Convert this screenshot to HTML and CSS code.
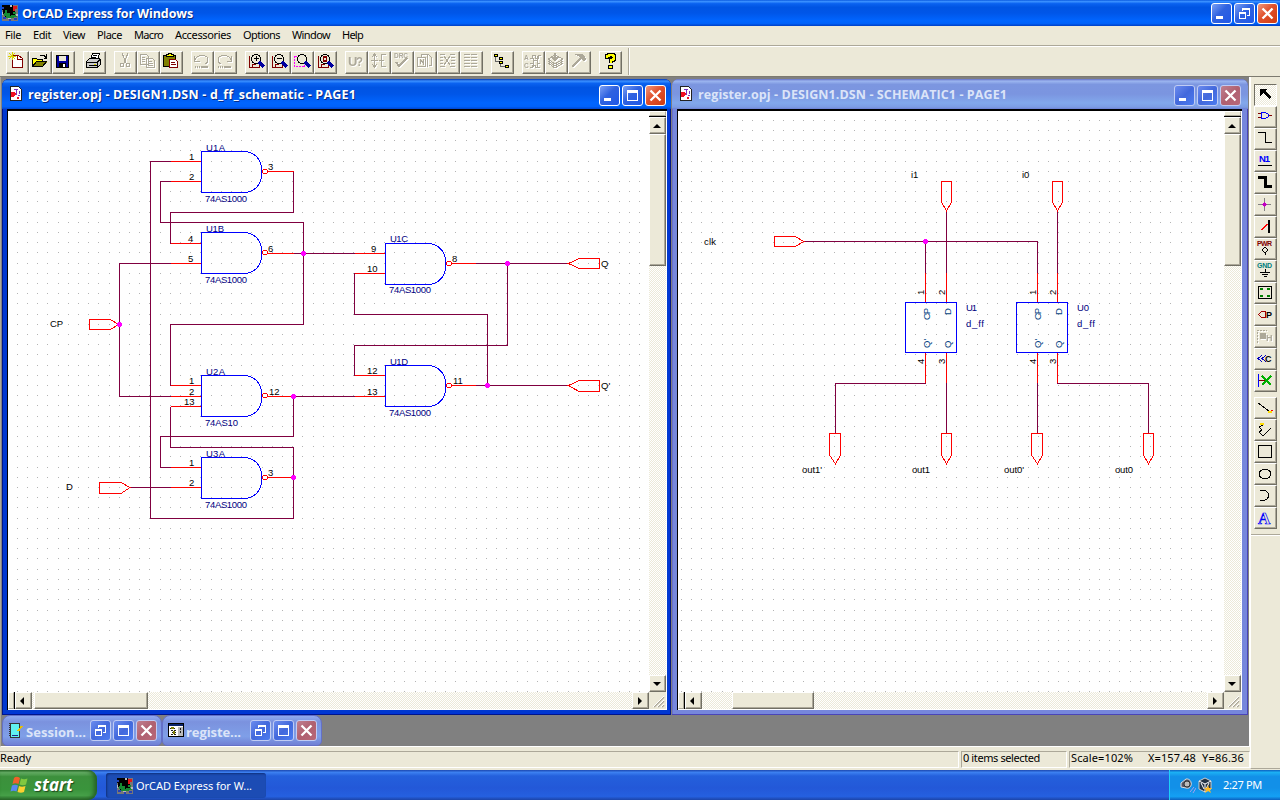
FILE: index.html
```html
<!DOCTYPE html>
<html lang="en">
<head>
<meta charset="utf-8">
<title>OrCAD Express for Windows</title>
<link rel="stylesheet" href="styles.css">
</head>
<body>
<svg class="defs" width="0" height="0">
  <defs>
    <symbol id="orcad" viewBox="0 0 16 16"><path fill="#777" d="M0 0h16v16H0z"/><path fill="#000" d="M0 0h11v5h2v6H8v2H3V9H1V5H0z"/><path fill="#158a32" d="M3 5h2v3h3v3h4v2H4v-2H2V8h1zM11 7h3v2h-3zM9 10h6v2H9z"/><path fill="#e01818" d="M11 1h4v3h-2v2h-2z"/><path fill="#2440b8" d="M0 2h2v2H0zM1 12h3v2H1zM7 14h2v2H7zM12 13h3v2h-3z"/><path fill="#bbb" d="M8 0h2v2H8zM0 7h1v3H0zM6 13h3v1H6zM14 9h2v2h-2z"/></symbol>
    <symbol id="page" viewBox="0 0 13 16"><path fill="#fff" stroke="#222" d="M.5 .5h8l3 3v11H.5z"/><path fill="#f01020" d="M1 6h3l2 2-2 3H1zM7 11h2v2H7z"/><path fill="none" stroke="#7a30c0" d="M4 3.500h4M6.500 4v5M8 9.500h2M9.500 5v3"/></symbol>
    <symbol id="min" viewBox="0 0 21 21"><path fill="#fff" d="M5 13h7v3H5z"/></symbol>
    <symbol id="max" viewBox="0 0 21 21"><path fill="#fff" fill-rule="evenodd" d="M5 5h11v11H5zM6 8v7h9V8z"/></symbol>
    <symbol id="restore" viewBox="0 0 21 21"><path fill="#fff" fill-rule="evenodd" d="M8 5h8v8h-3v-1h2V7H9v1H8zM5 9h7v7H5zM6 11v4h5v-4z"/></symbol>
    <symbol id="close" viewBox="0 0 21 21"><path fill="none" stroke="#fff" stroke-width="2.300" d="M5.500 5.500l10 10M15.500 5.500l-10 10"/></symbol>
    <symbol id="nand" overflow="visible"><path class="blue" d="M43 .5H.5v41H43"/><path class="blue" d="M43 .5C55 1 61 10 61 21S55 41 43 41.500"/><circle class="red" cx="64" cy="20.500" r="2.500"/></symbol>
    <symbol id="dot" overflow="visible"><path fill="#f0f" d="M-1-2h3v1h1v3h-1v1h-3v-1h-1v-3h1z"/></symbol>
    <symbol id="lens" overflow="visible"><path stroke="#800000" d="M5.500 6v11.500h10V15M8 14.500v3M8 14.500h4"/><circle cx="12" cy="9" r="4.500" fill="#ece9d8" stroke="#000"/><path stroke="#0000a0" stroke-width="3" d="M15 12l5 5"/></symbol>
    <symbol id="grip" viewBox="0 0 17 17"><path stroke="#aca899" stroke-width="1.600" d="M5 15L15 5M9 15l6-6M13 15l2-2"/><path stroke="#fff" d="M4 15L15 4M8 15l7-7M12 15l3-3"/></symbol>
  </defs>
</svg>

<div class="app">
  <header class="apptitle">
    <svg class="ico16"><use href="#orcad"/></svg>
    <span class="caption" data-fit="171">OrCAD Express for Windows</span>
    <div class="ctl"><i><svg><use href="#min"/></svg></i><i><svg><use href="#restore"/></svg></i><i class="x"><svg><use href="#close"/></svg></i></div>
  </header>
  <nav class="menu">
    <span data-fit="16">File</span><span data-fit="18">Edit</span><span data-fit="22">View</span><span data-fit="25">Place</span><span data-fit="29">Macro</span><span data-fit="56">Accessories</span><span data-fit="37">Options</span><span data-fit="38">Window</span><span data-fit="21">Help</span>
  </nav>
  <div class="toolbar">
    <div class="grp">
      <b><svg><path fill="#fff" stroke="#800000" d="M7.500 5.500v12h10v-9l-4-3zM12.500 5.500v4h4"/><path stroke="#d8d000" d="M4 3l6 6M10 3L4 9M7.500 2v8M3 6.500h8"/></svg></b>
      <b><svg><path fill="#808000" d="M4 17V8h4l1 1h6v3h4l-4 5z"/><path fill="#ff0" d="M5 9h3l1 1h5v2H8l-3 4z"/><path d="M4.500 17V8.500h4l1 1h5v2M4.500 16.500h10l4-5h-10zM12 5.500h4l2 2M18.500 4v4h-3"/></svg></b>
      <b><svg><path fill="#0000a0" stroke="#000" d="M5.500 5.500h12v12h-12z"/><path fill="#ece9d8" d="M8 6h7v5H8z"/><path fill="#000" d="M8 13h7v5H8z"/><path fill="#fff" d="M12 14h2v3h-2z"/></svg></b>
    </div>
    <div class="grp"><b><svg><path fill="#fff" stroke="#000" d="M8.500 9.500l2-6h7l-2 6z"/><path fill="#ccc" stroke="#000" d="M4.500 11.500l3-3h10l1 1v5l-3 3h-11z"/><path d="M5 12.500h10l3-3M11 5.500h4M10 7.500h4M7 15.500h8M15.500 12v5"/><path stroke="#d8d000" d="M12 14.500h2"/></svg></b></div>
    <div class="grp">
      <b class="off"><svg><path d="M9 3l4 10M15 3l-4 10"/><circle cx="9" cy="15" r="2"/><circle cx="15" cy="15" r="2"/></svg></b>
      <b class="off"><svg><path d="M4.500 4.500h6l2 2v8h-8zM10.500 8.500h6l2 2v7h-8zM6 7.500h3M6 9.500h3M6 11.500h3M12 11.500h4M12 13.500h5M12 15.500h5"/></svg></b>
      <b><svg><path fill="#808000" stroke="#000" d="M4.500 5.500h12v11h-12z"/><path fill="#ff0" stroke="#000" d="M7.500 6.500v-2h2v-1h3v1h2v2z"/><path fill="#fff" stroke="#800000" d="M10.500 9.500h6l2 2v6h-8zM12 12.500h4M12 14.500h5"/></svg></b>
    </div>
    <div class="grp">
      <b class="off"><svg><path d="M4.500 6v5h5M5 10c1-6 14-6 13 0 0 2-1 3-3 4"/><path stroke-width="2" stroke-dasharray="1 1" d="M5 17h7"/><path stroke-width="2" d="M12 17h6"/></svg></b>
      <b class="off"><svg><path d="M18.500 6v5h-5M18 10C17 4 4 4 5 10c0 2 1 3 3 4"/><path stroke-width="2" stroke-dasharray="1 1" d="M5 17h7"/><path stroke-width="2" d="M12 17h6"/></svg></b>
    </div>
    <div class="grp">
      <b><svg><use href="#lens"/><path d="M10 8.500h5M12.500 6v5"/></svg></b>
      <b><svg><use href="#lens"/><path d="M10 8.500h5"/></svg></b>
      <b><svg><path stroke="#f0f" stroke-dasharray="2 1" d="M4.500 6.500h10v10h-10z"/><circle cx="12" cy="9" r="4.500" fill="#ece9d8" stroke="#000"/><path stroke="#0000a0" stroke-width="3" d="M15 12l5 5"/></svg></b>
      <b><svg><use href="#lens"/><path stroke="#800000" stroke-width="1.500" d="M10.500 7v4h3V7z"/></svg></b>
    </div>
    <div class="grp">
      <b class="off"><svg><text class="big" x="4" y="16">U</text><text class="big" x="12" y="16" textLength="7" lengthAdjust="spacingAndGlyphs">?</text></svg></b>
      <b class="off"><svg><path d="M7.500 5v12M5 7l2.500-3L10 7M5 14l2.500 3 2.500-3M4 10.500h7M19 4.500h-5v12h5M12 10.500h5"/></svg></b>
      <b class="off"><svg><text class="drc" x="4" y="8" textLength="14">DRC</text><path stroke-width="2" d="M6 12l3 4 8-8"/></svg></b>
      <b class="off"><svg><path d="M8.500 6.500v-2h7l3 3v8h-3M4.500 7.500h8v9h-8zM7 14V9l3 4V9M14.500 5v12"/></svg></b>
      <b class="off"><svg><path d="M4 4.500h5M4 7.500h3M4 10.500h3M4 13.500h3M4 16.500h5M14 4.500h5M15 7.500h4M15 10.500h4M15 13.500h4M14 16.500h5M8 6l6 9M14 6l-6 9"/></svg></b>
      <b class="off"><svg><path d="M5 4.500h6M5 7.500h6M5 10.500h6M5 13.500h6M5 16.500h6M12 4.500h6M12 7.500h6M12 10.500h6M12 13.500h6M12 16.500h6"/></svg></b>
    </div>
    <div class="grp"><b><svg><path stroke="#666" d="M5.500 6v5.500H9M10.500 12v4.500h4"/><path fill="#ff0" stroke="#000" d="M4.500 4.500h3v2h-3zM9.500 7.500h3v2h-3zM9.500 11.500h3v2h-3zM15.500 15.500h3v2h-3z"/></svg></b></div>
    <div class="grp">
      <b class="off"><svg><text class="drc" x="3" y="10">A</text><text class="drc" x="3" y="18">C</text><path d="M9 8.500h2v-3h3v3h3v-3h3M9 13.500h3v-3h4v3h3M9 17.500h2v-2h3v2h5M12.500 8v9M16.500 6v11"/></svg></b>
      <b class="off"><svg><path d="M4 9l7-4 8 4-8 5zM4 11l7 5 8-5M4 13l7 5 8-5"/><path stroke-width="2" d="M11 3v7M8 7l3 3 3-3"/></svg></b>
      <b class="off"><svg><path stroke-width="2" d="M5 17L14 8"/><path class="gray" d="M8 4h7l4 5-2 2-5-5z"/></svg></b>
    </div>
    <div class="grp"><b><svg><path stroke="#000" stroke-width="4" d="M8.500 9V6h2V5h4v1h1v3h-1v1h-2v3M10 16.500h5"/><path stroke="#ff0" stroke-width="2" d="M8.500 8V6h2V5h4v1h1v3h-1v1h-2v3M11 16.500h3"/></svg></b></div>
    <div class="barend"></div>
  </div>

  <div class="work">
    <main class="mdi">
      <div class="row">
        <section class="win one">
          <div class="wtitle"><svg class="page"><use href="#page"/></svg><span class="caption" data-fit="328">register.opj - DESIGN1.DSN - d_ff_schematic - PAGE1</span>
            <div class="ctl"><i><svg><use href="#min"/></svg></i><i><svg><use href="#max"/></svg></i><i class="x"><svg><use href="#close"/></svg></i></div></div>
          <div class="client">
            <svg class="canvas" viewBox="8 111 641 581">
              <path class="grid" data-x="17.300" data-y="120.400" data-r="645" data-b="692"/>
              <g class="wire">
                <path d="M171 161.500H150.500V518.500H293.500V447.500H170.500V406.500"/>
                <path d="M171 181.500H160.500V222.500H303.500V324.500H170.500V385.500"/>
                <path d="M293.500 171.500V212.500H170.500V243.500M293 253.500H355M171 263.500H119.500V396.500H171"/>
                <path d="M355 396.500H293.500V436.500H160.500V467.500H171M130 487.500H171"/>
                <path d="M354.500 273V314.500H487.500V385.500M354.500 375.500V345.500H507.500V263.500M476 263.500H569M476 385.500H569"/>
              </g>
              <path class="red" d="M171 161.500h30M171 181.500h30M171 243.500h30M171 263.500h30M171 385.500h30M171 396.500h30M171 406.500h30M171 467.500h30M171 487.500h30M355 253.500h30M355 273.500h30M355 375.500h30M355 396.500h30M268 171.500h26M268 253.500h26M268 396.500h25M268 477.500h25M452 263.500h24M452 385.500h24"/>
              <path class="red" d="M89.500 319.500H110L119 324.500 110 329.500H89.500zM99.500 482.500H121L130 487.500 121 493.500H99.500zM599.500 258.500H579L568.500 263.500 579 268.500H599.500zM599.500 380.500H579L568.500 385.500 579 391.500H599.500z"/>
              <use href="#nand" x="201" y="151"/><use href="#nand" x="201" y="232"/><use href="#nand" x="201" y="375"/><use href="#nand" x="201" y="457"/><use href="#nand" x="385" y="243"/><use href="#nand" x="385" y="365"/>
              <use href="#dot" x="303" y="253"/><use href="#dot" x="119" y="324"/><use href="#dot" x="293" y="396"/><use href="#dot" x="293" y="477"/><use href="#dot" x="507" y="263"/><use href="#dot" x="487" y="385"/>
              <g class="navy">
                <text x="206" y="151" textLength="19">U1A</text><text x="206" y="232" textLength="18">U1B</text><text x="206" y="375" textLength="19">U2A</text><text x="206" y="457" textLength="19">U3A</text><text x="390" y="242" textLength="18">U1C</text><text x="390" y="365" textLength="18">U1D</text>
                <text x="205" y="202" textLength="42">74AS1000</text><text x="205" y="283" textLength="42">74AS1000</text><text x="205" y="426" textLength="33">74AS10</text><text x="205" y="508" textLength="42">74AS1000</text><text x="389" y="293" textLength="42">74AS1000</text><text x="389" y="416" textLength="42">74AS1000</text>
              </g>
              <g class="ink">
                <text x="189" y="160">1</text><text x="189" y="180">2</text><text x="188" y="242">4</text><text x="188" y="262">5</text><text x="189" y="384">1</text><text x="189" y="395">2</text><text x="184" y="405">13</text><text x="189" y="466">1</text><text x="189" y="486">2</text>
                <text x="268" y="170">3</text><text x="268" y="252">6</text><text x="269" y="395">12</text><text x="268" y="476">3</text><text x="371" y="252">9</text><text x="367" y="272">10</text><text x="367" y="374">12</text><text x="367" y="395">13</text><text x="452" y="262">8</text><text x="453" y="384">11</text>
                <text x="50" y="327" textLength="13">CP</text><text x="66" y="490">D</text><text x="601" y="267">Q</text><text x="601" y="389">Q'</text>
              </g>
            </svg>
            <div class="vs"><b class="split"></b><b class="sb"><s class="up"></s></b><b class="thumb"></b><b class="sb end"><s class="dn"></s></b></div>
            <div class="hs"><b class="split"></b><b class="sb"><s class="lf"></s></b><b class="thumb"></b><b class="sb end"><s class="rt"></s></b></div>
            <svg class="grip"><use href="#grip"/></svg>
          </div>
        </section>
        <section class="win two idle">
          <div class="wtitle"><svg class="page"><use href="#page"/></svg><span class="caption" data-fit="309">register.opj - DESIGN1.DSN - SCHEMATIC1 - PAGE1</span>
            <div class="ctl"><i><svg><use href="#min"/></svg></i><i><svg><use href="#max"/></svg></i><i class="x"><svg><use href="#close"/></svg></i></div></div>
          <div class="client">
            <svg class="canvas" viewBox="678 111 546 581">
              <path class="grid" data-x="681.200" data-y="120.400" data-r="1221" data-b="692"/>
              <path class="wire" d="M804 241.500H1037.500V273M925.500 241.500V273M946.500 211V273M1057.500 211V273M925.500 383V383.500H835.500V433M946.500 383V433M1037.500 383V433M1057.500 383V383.500H1148.500V433"/>
              <path class="red" d="M925.500 273v29M946.500 273v29M1037.500 273v29M1057.500 273v29M925.500 353v30M946.500 353v30M1037.500 353v30M1057.500 353v30"/>
              <path class="red" d="M774.500 236.500H795L804 241.500 795 246.500H774.500zM941.500 181.500h10V202L946.500 211 941.500 202zM1052.500 181.500h10V202L1057.500 211 1052.500 202zM829.500 433.500h11V455L835.500 464 829.500 455zM941.500 433.500h10V455L946.500 464 941.500 455zM1031.500 433.500h11V455L1037.500 464 1031.500 455zM1143.500 433.500h10V455L1148.500 464 1143.500 455z"/>
              <path class="blue" d="M905.500 302.500h51v50h-51zM1016.500 302.500h51v50h-51z"/>
              <use href="#dot" x="925" y="241"/>
              <g class="ink">
                <text x="704" y="245" textLength="12">clk</text><text x="911" y="178">i1</text><text x="1022" y="178">i0</text><text x="802" y="473" textLength="20">out1'</text><text x="912" y="473" textLength="18">out1</text><text x="1004" y="473" textLength="20">out0'</text><text x="1115" y="473" textLength="18">out0</text>
                <text transform="translate(924 295)rotate(-90)">1</text><text transform="translate(945 295)rotate(-90)">2</text><text transform="translate(1036 295)rotate(-90)">1</text><text transform="translate(1056 295)rotate(-90)">2</text>
                <text transform="translate(924 364)rotate(-90)">4</text><text transform="translate(945 364)rotate(-90)">3</text><text transform="translate(1036 364)rotate(-90)">4</text><text transform="translate(1056 364)rotate(-90)">3</text>
              </g>
              <g class="navy"><text x="966" y="311" textLength="11">U1</text><text x="966" y="327" textLength="18">d_ff</text><text x="1077" y="311" textLength="12">U0</text><text x="1077" y="327" textLength="18">d_ff</text></g>
              <g class="teal">
                <text transform="translate(930 320)rotate(-90)" textLength="12">CP</text><text transform="translate(951 315)rotate(-90)">D</text><text transform="translate(930 348)rotate(-90)">Q'</text><text transform="translate(951 348)rotate(-90)">Q</text>
                <text transform="translate(1041 320)rotate(-90)" textLength="12">CP</text><text transform="translate(1062 315)rotate(-90)">D</text><text transform="translate(1041 348)rotate(-90)">Q'</text><text transform="translate(1062 348)rotate(-90)">Q</text>
              </g>
            </svg>
            <div class="vs"><b class="split"></b><b class="sb"><s class="up"></s></b><b class="thumb"></b><b class="sb end"><s class="dn"></s></b></div>
            <div class="hs"><b class="split"></b><b class="sb"><s class="lf"></s></b><b class="thumb"></b><b class="sb end"><s class="rt"></s></b></div>
            <svg class="grip"><use href="#grip"/></svg>
          </div>
        </section>
      </div>
      <div class="mins">
        <div class="mini idle"><svg class="mi"><path fill="#60f0f0" stroke="#333" d="M2.500 1.500h9v14h-9z"/><path stroke="#333" stroke-dasharray="1 1" d="M1.500 1v14"/><path stroke="#e8c000" stroke-width="2" d="M14 4l-4 5"/><path stroke="#228" d="M4 13.500h6"/></svg><span class="caption" data-fit="60">Session...</span><div class="ctl"><i><svg><use href="#restore"/></svg></i><i><svg><use href="#max"/></svg></i><i class="x"><svg><use href="#close"/></svg></i></div></div>
        <div class="mini idle"><svg class="mi"><path fill="#fff" stroke="#000" d="M.5 1.500h15v13H.5z"/><path fill="#0a246a" d="M1 2h14v2H1z"/><path fill="#bbb" d="M10 5h5v9h-5z"/><path stroke="#222" stroke-dasharray="2 1" d="M2 6.500h6M3 8.500h5M4 10.500h4M3 12.500h5M12.500 6v6"/><path fill="#808000" d="M3 5h3v2H3zM5 9h2v3H5z"/></svg><span class="caption" data-fit="55">registe...</span><div class="ctl"><i><svg><use href="#restore"/></svg></i><i><svg><use href="#max"/></svg></i><i class="x"><svg><use href="#close"/></svg></i></div></div>
      </div>
    </main>
    <aside class="palette">
      <div class="pal">
        <b class="down"><svg><path fill="#000" d="M7 6h7l-2 2 6 6-2 2-6-6-3 3z"/></svg></b>
        <b><svg><path stroke="#800000" d="M5 8.500h4M5 12.500h4M16 10.500h3"/><path stroke="#00f" d="M8.500 7.500v6h4l3-2v-2l-3-2z"/></svg></b>
        <b><svg><path d="M5 5.500h7.500v10H19"/></svg></b>
        <b><svg><text class="n1" x="6" y="13" textLength="11">N1</text><path d="M5 16.500h14"/></svg></b>
        <b><svg><path stroke-width="3" d="M5 6.500h7.500v9H19"/></svg></b>
        <b><svg><path stroke="#808080" d="M5 11.500h13M11.500 5v13"/><path fill="#c000c0" d="M10 10h3v3h-3zM11 9h1v5h-1zM9 11h5v1H9z"/></svg></b>
        <b><svg><path stroke="#f00" d="M8.500 15l6-6"/><path stroke-width="2" d="M16 5v13"/></svg></b>
        <b><svg><text class="pwr" x="4" y="9" textLength="15">PWR</text><circle cx="12" cy="13" r="2.300"/><path d="M12.500 15v3"/></svg></b>
        <b><svg><text class="gnd" x="4" y="9" textLength="15">GND</text><path d="M12.500 10v4M7 13.500h10M9 15.500h6M11 17.500h3"/></svg></b>
        <b><svg><path d="M5.500 5.500h13v12h-13z"/><path fill="#008000" d="M7 7h3v2H7zM14 7h3v2h-3zM7 14h3v2H7zM14 14h3v2h-3z"/></svg></b>
        <b><svg><path stroke="#a00000" d="M12.500 8.500h-4l-3 3 3 3h4z"/><text class="k" x="13" y="15">P</text></svg></b>
        <b class="off"><svg><path stroke-dasharray="2 1" d="M4.500 18V5.500h9"/><circle class="gray" cx="10" cy="11" r="3"/><text class="k" x="13" y="16">H</text></svg></b>
        <b><svg><path stroke="#0000c0" d="M9 8l-4 3.500L9 15M13 8l-4 3.500 4 3.500"/><text class="k" x="12" y="15">C</text></svg></b>
        <b><svg><path stroke="#00f" d="M5.500 5v13"/><path stroke="#800000" d="M6 11.500h6"/><path stroke="#00b000" stroke-width="1.500" d="M9 7l9 9M18 7l-9 9"/></svg></b>
      </div>
      <div class="pal">
        <b><svg><path d="M5 7l11 8"/><path stroke="#fd0" stroke-width="2" d="M15 16h4"/><path stroke="#f00" d="M18 14.500h2"/></svg></b>
        <b><svg><path d="M10 7l-4 2 3 3-3 2 4 4 8-8"/><path stroke="#fd0" stroke-width="2" d="M7 6h4"/></svg></b>
        <b><svg><path d="M5.500 5.500h13v12h-13z"/></svg></b>
        <b><svg><ellipse cx="12" cy="12" rx="6" ry="4.500"/></svg></b>
        <b><svg><path d="M7 6h3c9 2 7 11-3 11"/></svg></b>
        <b><svg><text class="aa" x="5" y="18" textLength="13">A</text></svg></b>
      </div>
      <div class="palend"></div>
    </aside>
    <footer class="status"><span class="ready"><em data-fit="31">Ready</em></span><span class="items"><em data-fit="77">0 items selected</em></span><span class="scale"><em data-fit="62">Scale=102%</em><em data-fit="48">X=157.48</em><em data-fit="42">Y=86.36</em></span></footer>
  </div>
  <div class="taskbar">
    <div class="start"><svg class="flag" viewBox="0 0 20 20"><path fill="#f0602a" d="M4 3c2-2 4-1 6 0L8.500 9C6.500 8 4.500 8 2.500 9z"/><path fill="#80c840" d="M11 3.500c2 1 4 1 6.500 0L16 9.500c-2 1-4 1-6.500 0z"/><path fill="#5888f0" d="M2 10.500c2-1 4-1 6 0l-1.500 6c-2-1-4-1-6 0z"/><path fill="#fcd030" d="M9 11c2 1 4 1 6.500 0l-1.500 6c-2 1-4 1-6.500 0z"/></svg><span data-fit="39">start</span></div>
    <div class="task"><svg class="ico16"><use href="#orcad"/></svg><span data-fit="116">OrCAD Express for W...</span></div>
    <div class="tray">
      <svg class="ti"><path fill="#556" stroke="#ddd" d="M2 6l5-4c7-1 7 11 0 9L2 10z"/><circle cx="8" cy="7" r="3" fill="#bbb" stroke="#333"/><path stroke="#a0a0f0" d="M11 15l4-5M14 16l3-5"/></svg>
      <svg class="ti"><path fill="#234" stroke="#ccc" d="M2 4l6-3 6 3v8l-6 3-6-3z"/><path stroke="#fff" d="M2 4l6 3 6-3M8 7v8M4 6l3 6M12 6l-3 6"/><path fill="#fb2" d="M11 8l1 3h3l-2 2 1 3-3-2-3 2 1-3-2-2h3z"/></svg>
      <span data-fit="39">2:27 PM</span>
    </div>
  </div>
</div>
<script src="app.js"></script>
</body>
</html>
```

FILE: styles.css
```css
* { box-sizing: border-box; }
body { margin: 0; overflow: hidden; font: 11px/14px "Noto Sans", "Open Sans", sans-serif; color: #000; }
.defs { position: absolute; }
.app { width: 1280px; height: 800px; display: flex; flex-direction: column; background: #ece9d8; }
svg { fill: none; stroke: none; shape-rendering: crispEdges; flex: none; display: block; }
[data-fit] { white-space: nowrap; flex: none; display: inline-block; }
em, i, b, s { font-style: normal; text-decoration: none; }
.ico16 { width: 16px; height: 16px; }
.caption { font: bold 12.500px/18px "Open Sans", "Noto Sans", sans-serif; color: #fff; text-shadow: 1px 1px 0 #0a2a80; }
.ctl { margin-left: auto; display: flex; gap: 2px; }
.ctl i { width: 21px; height: 21px; border: 1px solid #fff; border-radius: 3px; background: linear-gradient(135deg, #7ba0f5, #2f62e0 45%, #2058e8); }
.ctl i svg { width: 21px; height: 21px; margin: -1px; }
.ctl i.x { background: linear-gradient(135deg, #f0987c, #e0502c 45%, #d03c10); }
.ctl i.x svg { shape-rendering: auto; }

.apptitle { height: 26px; display: flex; align-items: center; padding: 0 2px 0 2px; background: linear-gradient(#0a5ae0 0, #3a90ff 6%, #0a62f0 14%, #0054e3 28%, #0056e8 50%, #0065ff 80%, #0062fa 90%, #003fc4 100%); }
.apptitle .caption { margin-left: 4px; padding-top: 2px; }
.menu { height: 20px; display: flex; gap: 12px; padding: 2px 0 0 5px; border-bottom: 1px solid #aca899; }
.toolbar { height: 31px; display: flex; gap: 8px; padding: 4px 0 0 6px; border-top: 1px solid #fff; border-bottom: 1px solid #7c7a70; }
.grp { display: flex; }
.grp b, .pal b { width: 23px; height: 23px; background: #ece9d8; border: 1px solid; border-color: #fff #716f64 #716f64 #fff; box-shadow: inset -1px -1px #aca899; }
.grp svg, .pal svg { width: 22px; height: 21px; margin: -2px; stroke: #000; }
.grp svg text, .pal svg text { stroke: none; fill: #000; }
.grp .off svg, .pal .off svg { stroke: #aca899; filter: drop-shadow(1px 1px 0 #fff); }
.grp .off svg text, .pal .off svg text { fill: #aca899; }
.gray { fill: #aca899; }
svg path[fill]:not([stroke]) { stroke: none; }
.big { font: bold 13px "Liberation Sans", sans-serif; }
.drc { font: bold 6.500px "Liberation Sans", sans-serif; }
.barend { width: 1px; height: 27px; margin: -3px 0 0 -2px; background: #aca899; box-shadow: 1px 0 #fff; }

.work { height: 693px; display: grid; grid-template: 670px 23px / 1250px 30px; }
.mdi { background: #808080; border-left: 1px solid #aca899; border-right: 1px solid #fff; border-bottom: 1px solid #fff; padding: 2px 0 0 1px; display: flex; flex-direction: column; }
.row { display: flex; gap: 1px; height: 636px; }
.win { background: #0038d0; border-radius: 7px 7px 0 0; display: flex; flex-direction: column; padding: 0 4px 4px 5px; box-shadow: inset -1px -1px #00158a, inset 1px 0 #00158a, inset -2px -2px #0033d8; }
.one { width: 669px; }
.two { width: 576px; padding-right: 5px; }
.win.idle { background: #7687dc; box-shadow: inset -1px -1px #4a45b8, inset 1px 0 #6a70cc; }
.wtitle { height: 30px; margin: 0 -4px 0 -5px; padding: 2px 5px 0 8px; border-radius: 7px 7px 0 0; display: flex; align-items: center; background: linear-gradient(#0036b8 0, #3a90ff 7%, #0a62f0 15%, #0054e3 28%, #0056e8 50%, #0065ff 80%, #0062fa 92%, #0045d0 100%); }
.idle .wtitle { margin-right: -5px; background: linear-gradient(#6470c8 0, #9cb6f0 7%, #7c96e0 18%, #7b95e0 50%, #82a8ec 80%, #7c9ce4 94%, #6c80d4 100%); }
.two .wtitle { padding-right: 7px; }
.page { width: 13px; height: 16px; margin: -2px 5px 0 0; }
.idle .caption { color: #dbe4f8; text-shadow: none; }
.idle .ctl i { border-color: #c0ccf4; background: linear-gradient(135deg, #6c8cee, #4268dc 50%, #4c7cf0); }
.idle .ctl i.x { background: linear-gradient(135deg, #c08090, #b06070 50%, #b86878); }
.client { height: 601px; background: #fff; border-top: 2px solid #000; border-left: 1px solid #000; display: grid; grid-template: 581px 18px / 641px 18px; }
.one .client { width: 660px; }
.two .client { width: 565px; grid-template-columns: 546px 18px; }
.canvas { width: 100%; height: 581px; }
.canvas text { font: 9.500px "Liberation Sans", Arial, sans-serif; stroke: none; }
.ink { fill: #000; }
.navy { fill: #000080; }
.teal { fill: #004080; }
.wire { stroke: #800040; }
.red { stroke: #f00; }
.blue { stroke: #00f; }
.grid { stroke: #b4b4b4; }
.vs, .hs { display: flex; background: repeating-conic-gradient(#ece9d8 0 25%, #fff 0 50%) 0 0 / 2px 2px; }
.vs { flex-direction: column; border-right: 1px solid #fff; }
.hs { border-bottom: 1px solid #fff; }
.client b { background: #ece9d8; border: 1px solid; border-color: #fff #716f64 #716f64 #fff; box-shadow: inset -1px -1px #aca899; flex: none; display: flex; align-items: center; justify-content: center; }
.client .split { border-color: #fff #aca899 #aca899 #fff; }
.vs .split { height: 5px; margin-bottom: 1px; box-shadow: 0 1px #000; }
.hs .split { width: 6px; box-shadow: 1px 0 #000; }
.vs .sb { height: 17px; }
.hs .sb { width: 17px; margin-left: 1px; }
.vs .thumb { height: 132px; }
.hs .thumb { width: 114px; margin-left: 2px; }
.two .hs .thumb { width: 82px; margin-left: 30px; }
.vs .end { margin-top: auto; }
.hs .end { margin-left: auto; }
.client s { border: 4px solid transparent; margin: 0 1px 0 0; }
.client .up { border-top: 0; border-bottom-color: #000; }
.client .dn { border-bottom: 0; border-top-color: #000; }
.client .lf { border-left: 0; border-right-color: #000; margin-right: 3px; }
.client .rt { border-right: 0; border-left-color: #000; }
.grip { width: 17px; height: 17px; background: #ece9d8; shape-rendering: auto; }
.mins { display: flex; }
.mini { width: 160px; height: 31px; display: flex; align-items: center; padding: 0 4px 0 5px; border: 1px solid #6470c8; border-radius: 8px 8px 5px 5px; background: linear-gradient(#90aaf0, #7b92de 20%, #7f9fe8 70%, #7080d4); }
.mi { width: 17px; height: 17px; margin-right: 1px; }
.mini .caption { font-size: 13px; padding-top: 2px; }

.palette { grid-row: 1 / 3; grid-column: 2; border-left: 1px solid #fff; padding: 7px 0 0 3px; border-bottom: 1px solid #aca899; height: 692px; }
.pal { margin-bottom: 5px; }
.pal b { display: block; height: 22px; }
.pal .down { border-color: #716f64 #fff #fff #716f64; box-shadow: none; background: repeating-conic-gradient(#ece9d8 0 25%, #fff 0 50%) 0 0 / 2px 2px; }
.palend { height: 2px; margin-left: -3px; border-top: 1px solid #aca899; background: #fff; }
.pal svg .n1 { font: bold 9.500px "Liberation Sans", sans-serif; fill: #00f; }
.pal svg .pwr { font: bold 7px "Liberation Sans", sans-serif; fill: #800000; }
.pal svg .gnd { font: bold 7px "Liberation Sans", sans-serif; fill: #008080; }
.k { font: bold 9px "Liberation Sans", sans-serif; }
.pal svg .aa { font: bold 17px "Liberation Serif", serif; fill: #ece9d8; stroke: #00f; stroke-width: .7; }

.status { display: flex; gap: 2px; padding: 4px 0 2px; }
.status span { border: 1px solid; border-color: #aca899 #fff #fff #aca899; height: 17px; line-height: 14px; padding-left: 1px; display: flex; }
.status em { margin-top: -1px; }
.ready { width: 959px; }
.status .ready { border-left: 0; padding-left: 0; }
.items { width: 106px; }
.scale { width: 181px; }
.scale em + em { margin-left: 15px; }
.scale em + em + em { margin-left: 6px; }

.taskbar { height: 30px; display: flex; align-items: stretch; background: linear-gradient(#1c48b0 0, #3c80f0 8%, #2460dc 20%, #2358d8 60%, #2560e0 88%, #1c44a8 100%); color: #fff; }
.start { width: 97px; display: flex; align-items: center; padding-left: 10px; border-radius: 0 9px 9px 0; background: linear-gradient(#2c702c 0, #68b068 8%, #3c903c 22%, #3a943c 65%, #46a048 85%, #2a6a2a 100%); box-shadow: inset -3px 0 4px #246024; }
.start span { font: italic bold 17px/24px "Open Sans", sans-serif; text-shadow: 1px 1px 1px #1c4a1c; margin-left: 4px; }
.flag { width: 20px; height: 20px; shape-rendering: auto; }
.task { width: 160px; height: 25px; margin: 3px 0 0 9px; padding-left: 11px; display: flex; align-items: center; border-radius: 3px; background: #1c4cb4; box-shadow: inset 1px 1px 2px #10307c; }
.task span { margin-left: 3px; }
.tray { width: 111px; margin-left: auto; padding: 0 18px 0 9px; display: flex; align-items: center; background: linear-gradient(#0c60c0 0, #1cb0f4 8%, #1290e8 22%, #1290e8 60%, #14a0f4 88%, #0c60c0 100%); border-left: 1px solid #1cd0f8; }
.tray span { margin-left: auto; }
.ti { width: 17px; height: 17px; margin-right: 1px; shape-rendering: auto; }
```

FILE: app.js
```js
// Grid points every 0.1 inch at the 102% zoom, snapped to whole pixels
document.querySelectorAll('.grid').forEach(function (p) {
  var d = '', s = p.dataset;
  for (var y = +s.y; y < +s.b; y += 10.2)
    for (var x = +s.x; x < +s.r; x += 10.2)
      d += 'M' + Math.floor(x) + ' ' + (Math.floor(y) + 0.5) + 'h1';
  p.setAttribute('d', d);
});

document.querySelectorAll('[data-fit]').forEach(function (el) {
  var w = +el.dataset.fit, n = el.textContent.length;
  el.style.letterSpacing = (w - el.getBoundingClientRect().width) / n + 'px';
  el.style.width = w + 'px';
});
```
